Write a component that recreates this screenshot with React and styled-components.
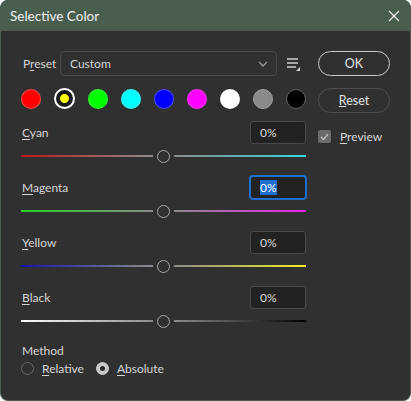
import React from "react";
import styled, { createGlobalStyle } from "styled-components";

const GlobalStyle = createGlobalStyle`
  html, body {
    margin: 0;
    padding: 0;
    background: #ffffff;
  }
  * {
    box-sizing: border-box;
  }
`;

const Window = styled.div`
  width: 411px;
  height: 401px;
  background: #303030;
  border: 1px solid #4a5e50;
  border-top: none;
  border-radius: 8px;
  overflow: hidden;
  font-family: Lato, "Noto Sans", sans-serif;
  font-size: 12px;
  color: #d6d6d6;
  display: flex;
  flex-direction: column;
`;

const TitleBar = styled.div`
  height: 31px;
  flex: none;
  background: #4a5e50;
  display: flex;
  align-items: center;
  justify-content: space-between;
  padding: 0 9px 0 9px;
  color: #f2f2f2;
  font-size: 13.5px;
`;

const CloseButton = styled.div`
  width: 14px;
  height: 14px;
  display: flex;
  align-items: center;
  justify-content: center;
`;

const Body = styled.div`
  display: flex;
  gap: 12px;
  padding: 20px 0 0 20px;
`;

const LeftColumn = styled.div`
  width: 285px;
  display: flex;
  flex-direction: column;
`;

const RightColumn = styled.div`
  width: 72px;
  display: flex;
  flex-direction: column;
  gap: 12px;
`;

const PresetRow = styled.div`
  height: 25px;
  display: flex;
  align-items: center;
`;

const Label = styled.span`
  color: #d6d6d6;
  white-space: nowrap;
  u {
    text-decoration: underline;
    text-underline-offset: 2px;
  }
`;

const PresetLabel = styled(Label)`
  width: 39px;
  padding-left: 2px;
`;

const Select = styled.div`
  width: 217px;
  height: 25px;
  border: 1px solid #4b4b4b;
  border-radius: 4px;
  display: flex;
  align-items: center;
  justify-content: space-between;
  padding: 0 8px 0 9px;
  color: #d6d6d6;
`;

const MenuIcon = styled.div`
  margin-left: 9px;
  display: flex;
  align-items: center;
`;

const Swatches = styled.div`
  display: flex;
  gap: 13px;
  margin-top: 12px;
  height: 21px;
  align-items: center;
`;

const Swatch = styled.div`
  width: 20px;
  height: 20px;
  border-radius: 50%;
  background: ${(p) => p.$color};
  border: 1px solid ${(p) => p.$edge || "rgba(255,255,255,0.2)"};

  &.selected {
    width: 21px;
    height: 21px;
    border: 2px solid #ffffff;
    padding: 2px;
    background-clip: content-box;
    background-color: ${(p) => p.$color};
    box-shadow: inset 0 0 0 4px #1a1a1a;
  }
`;

const AdjustBlock = styled.div`
  display: flex;
  flex-direction: column;
  margin-top: 12px;

  & + & {
    margin-top: 14px;
  }
`;

const AdjustHead = styled.div`
  height: 23px;
  display: flex;
  align-items: center;
  justify-content: space-between;
  padding-left: 1px;
`;

const ValueInput = styled.div`
  width: 56px;
  height: 23px;
  background: #222222;
  border: 1px solid ${(p) => (p.$focused ? "#1f6fd1" : "#4a4a4a")};
  box-shadow: ${(p) => (p.$focused ? "0 0 0 1px #1f6fd1" : "none")};
  border-radius: 3px;
  display: flex;
  align-items: center;
  padding-left: 9px;
  color: #dcdcdc;

  span {
    background: ${(p) => (p.$focused ? "#1f6fd1" : "transparent")};
    color: ${(p) => (p.$focused ? "#ffffff" : "#dcdcdc")};
  }
`;

const SliderRow = styled.div`
  margin-top: 6px;
  height: 12px;
  display: flex;
  align-items: center;
`;

const Track = styled.div`
  height: 2px;
  width: ${(p) => p.$width}px;
  background: linear-gradient(to right, ${(p) => p.$from}, ${(p) => p.$to});
`;

const Thumb = styled.div`
  width: 13px;
  height: 13px;
  border-radius: 50%;
  border: 1.5px solid #a8a8a8;
  margin: 0 4px;
  flex: none;
`;

const MethodBlock = styled.div`
  margin-top: 16px;
  display: flex;
  flex-direction: column;
  gap: 1px;
  padding-left: 1px;
`;

const RadioRow = styled.div`
  display: flex;
  align-items: center;
  height: 18px;
`;

const Radio = styled.div`
  display: flex;
  align-items: center;
  gap: 8px;
  margin-right: 13px;
  margin-left: -1px;
`;

const RadioDot = styled.div`
  width: 13px;
  height: 13px;
  border-radius: 50%;
  border: 1px solid ${(p) => (p.$checked ? "#c8c8c8" : "#6a6a6a")};
  background: ${(p) => (p.$checked ? "#c8c8c8" : "transparent")};
  display: flex;
  align-items: center;
  justify-content: center;

  &::after {
    content: "";
    display: ${(p) => (p.$checked ? "block" : "none")};
    width: 5px;
    height: 5px;
    border-radius: 50%;
    background: #2a2a2a;
  }
`;

const PillButton = styled.div`
  height: 25px;
  border-radius: 13px;
  border: 1px solid ${(p) => (p.$primary ? "#c9c9c9" : "#4e4e4e")};
  display: flex;
  align-items: center;
  justify-content: center;
  color: #e4e4e4;
  font-size: 12.5px;
`;

const PreviewRow = styled.div`
  display: flex;
  align-items: center;
  gap: 9px;
  margin-top: 4px;
`;

const CheckBox = styled.div`
  width: 13px;
  height: 13px;
  border-radius: 2px;
  background: #6b6b6b;
  display: flex;
  align-items: center;
  justify-content: center;
`;

const swatches = [
  { color: "#ff0000", edge: "rgba(255,120,120,0.6)" },
  { color: "#ffff00", selected: true },
  { color: "#00ff00" },
  { color: "#00ffff" },
  { color: "#0000ff", edge: "rgba(120,120,255,0.6)" },
  { color: "#ff00ff" },
  { color: "#ffffff" },
  { color: "#8a8a8a", edge: "#a0a0a0" },
  { color: "#000000", edge: "#6a6a6a" },
];

const sliders = [
  { key: "C", rest: "yan", from: "#c01818", to: "#33d6dc" },
  { key: "M", rest: "agenta", from: "#22d222", to: "#ee22ee", focused: true },
  { key: "Y", rest: "ellow", from: "#1414b0", to: "#f0f020" },
  { key: "B", rest: "lack", from: "#ffffff", to: "#000000" },
];

function Slider({ from, to }) {
  return (
    <SliderRow>
      <Track $width={132} $from={from} $to="#8c8c8c" />
      <Thumb />
      <Track $width={132} $from="#8c8c8c" $to={to} />
    </SliderRow>
  );
}

export default function App() {
  return (
    <>
      <GlobalStyle />
      <Window>
        <TitleBar>
          <span>Selective Color</span>
          <CloseButton>
            <svg width="12" height="12" viewBox="0 0 12 12">
              <path d="M1 1L11 11M11 1L1 11" stroke="#f0f0f0" strokeWidth="1.2" />
            </svg>
          </CloseButton>
        </TitleBar>
        <Body>
          <LeftColumn>
            <PresetRow>
              <PresetLabel>
                P<u>r</u>eset
              </PresetLabel>
              <Select>
                <span>Custom</span>
                <svg width="10" height="6" viewBox="0 0 10 6">
                  <path d="M1 1L5 5L9 1" stroke="#9a9a9a" strokeWidth="1.3" fill="none" />
                </svg>
              </Select>
              <MenuIcon>
                <svg width="15" height="14" viewBox="0 0 15 14">
                  <path d="M1 2H12M1 6H12M1 10H10" stroke="#d0d0d0" strokeWidth="1.5" />
                  <path d="M14 10L14 14L10 14Z" fill="#d0d0d0" />
                </svg>
              </MenuIcon>
            </PresetRow>

            <Swatches>
              {swatches.map((s, i) => (
                <Swatch
                  key={i}
                  $color={s.color}
                  $edge={s.edge}
                  className={s.selected ? "selected" : ""}
                />
              ))}
            </Swatches>

            {sliders.map((s) => (
              <AdjustBlock key={s.key}>
                <AdjustHead>
                  <Label>
                    <u>{s.key}</u>
                    {s.rest}
                  </Label>
                  <ValueInput $focused={s.focused}>
                    <span>0%</span>
                  </ValueInput>
                </AdjustHead>
                <Slider from={s.from} to={s.to} />
              </AdjustBlock>
            ))}

            <MethodBlock>
              <Label>Method</Label>
              <RadioRow>
                <Radio>
                  <RadioDot />
                  <Label>
                    <u>R</u>elative
                  </Label>
                </Radio>
                <Radio>
                  <RadioDot $checked />
                  <Label>
                    <u>A</u>bsolute
                  </Label>
                </Radio>
              </RadioRow>
            </MethodBlock>
          </LeftColumn>

          <RightColumn>
            <PillButton $primary>OK</PillButton>
            <PillButton>
              <span>
                <u>R</u>eset
              </span>
            </PillButton>
            <PreviewRow>
              <CheckBox>
                <svg width="9" height="8" viewBox="0 0 9 8">
                  <path d="M1 4L3.5 6.5L8 1" stroke="#bdbdbd" strokeWidth="1.4" fill="none" />
                </svg>
              </CheckBox>
              <Label>
                <u>P</u>review
              </Label>
            </PreviewRow>
          </RightColumn>
        </Body>
      </Window>
    </>
  );
}
